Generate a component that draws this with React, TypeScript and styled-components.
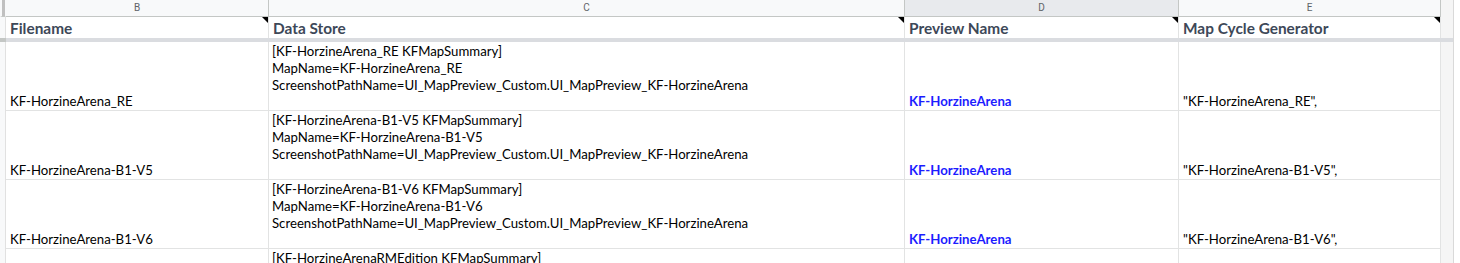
import React from "react";
import styled, { createGlobalStyle, css } from "styled-components";

const GlobalStyle = createGlobalStyle`
  html, body { margin: 0; padding: 0; background: #ffffff; overflow: hidden; }
  body { font-family: Lato, "Liberation Sans", Arial, sans-serif; }
`;

const COLS = "6px 263px 636px 274px 262px 13px 1fr";

const Sheet = styled.div`
  display: flex;
  flex-direction: column;
  width: 1460px;
  height: 263px;
  overflow: hidden;
  background: #ffffff;
`;

const Row = styled.div<{ $h: number }>`
  display: grid;
  grid-template-columns: ${COLS};
  height: ${(p) => p.$h}px;
  flex: none;
`;

const Gutter = styled.div<{ $kind: "colhead" | "row" | "divider" }>`
  box-sizing: border-box;
  ${(p) =>
    p.$kind === "colhead"
      ? css`
          background: #f8f9fa;
          border-left: 2px solid #f8f9fa;
          border-right: 1px solid #f8f9fa;
          box-shadow: inset 3px 0 0 #c0c0c0;
          border-bottom: 1px solid #c4c7c5;
        `
      : p.$kind === "divider"
      ? css`
          background: #c4c7c5;
        `
      : css`
          background: #f8f9fa;
          border-right: 1px solid #e1e1e1;
        `}
`;

const ColLetter = styled.div<{ $selected?: boolean }>`
  box-sizing: border-box;
  background: ${(p) => (p.$selected ? "#e8eaed" : "#f8f9fa")};
  border-right: 1px solid #c4c7c5;
  border-bottom: 1px solid #c4c7c5;
  font-family: Roboto, "Liberation Sans", Arial, sans-serif;
  font-size: 10px;
  color: #5f6368;
  display: flex;
  align-items: center;
  justify-content: center;
  line-height: 16px;
`;

const Track = styled.div<{ $divider?: boolean }>`
  box-sizing: border-box;
  background: ${(p) => (p.$divider ? "#dadce0" : "#f5f5f5")};
  border-right: 1px solid #d9d9d9;
`;

const Blank = styled.div`
  background: #ffffff;
`;

const HeadCell = styled.div`
  position: relative;
  box-sizing: border-box;
  border-right: 1px solid #e2e3e3;
  padding: 0 4px 0 4px;
  display: flex;
  align-items: flex-end;
  font-weight: 700;
  font-size: 15.4px;
  line-height: 19px;
  color: #3d4858;
  white-space: nowrap;
  &::after {
    content: "";
    position: absolute;
    top: 0;
    right: 0;
    width: 0;
    height: 0;
    border-top: 6px solid #000000;
    border-left: 6px solid transparent;
  }
`;

const DividerCell = styled.div`
  background: #dadce0;
`;

const Cell = styled.div<{ $align?: "top" | "bottom"; $tone?: "plain" | "link" }>`
  box-sizing: border-box;
  border-right: 1px solid #e2e3e3;
  border-bottom: 1px solid #e2e3e3;
  padding: ${(p) => (p.$align === "top" ? "1px 3px 0 3px" : "0 3px 0 4px")};
  display: flex;
  flex-direction: column;
  justify-content: ${(p) => (p.$align === "top" ? "flex-start" : "flex-end")};
  font-size: 13.2px;
  line-height: 17px;
  color: ${(p) => (p.$tone === "link" ? "#1c1cff" : "#000000")};
  font-weight: ${(p) => (p.$tone === "link" ? 700 : 400)};
  white-space: nowrap;
  overflow: hidden;
`;

const Line = styled.div``;

type Entry = { name: string; summary: string; preview: string };

const entries: Entry[] = [
  { name: "KF-HorzineArena_RE", summary: "KF-HorzineArena_RE", preview: "KF-HorzineArena" },
  { name: "KF-HorzineArena-B1-V5", summary: "KF-HorzineArena-B1-V5", preview: "KF-HorzineArena" },
  { name: "KF-HorzineArena-B1-V6", summary: "KF-HorzineArena-B1-V6", preview: "KF-HorzineArena" },
];

export default function App() {
  return (
    <>
      <GlobalStyle />
      <Sheet>
        <Row $h={17}>
          <Gutter $kind="colhead" />
          <ColLetter>B</ColLetter>
          <ColLetter>C</ColLetter>
          <ColLetter $selected>D</ColLetter>
          <ColLetter>E</ColLetter>
          <Track />
          <Blank />
        </Row>
        <Row $h={21}>
          <Gutter $kind="row" />
          <HeadCell>Filename</HeadCell>
          <HeadCell>Data Store</HeadCell>
          <HeadCell>Preview Name</HeadCell>
          <HeadCell>Map Cycle Generator</HeadCell>
          <Track />
          <Blank />
        </Row>
        <Row $h={4}>
          <Gutter $kind="divider" />
          <DividerCell />
          <DividerCell />
          <DividerCell />
          <DividerCell />
          <Track $divider />
          <Blank />
        </Row>
        {entries.map((e) => (
          <Row $h={69} key={e.name}>
            <Gutter $kind="row" />
            <Cell $align="bottom">{e.name}</Cell>
            <Cell $align="top">
              <Line>[{e.summary} KFMapSummary]</Line>
              <Line>MapName={e.summary}</Line>
              <Line>ScreenshotPathName=UI_MapPreview_Custom.UI_MapPreview_{e.preview}</Line>
            </Cell>
            <Cell $align="bottom" $tone="link">{e.preview}</Cell>
            <Cell $align="bottom">"{e.name}",</Cell>
            <Track />
            <Blank />
          </Row>
        ))}
        <Row $h={69}>
          <Gutter $kind="row" />
          <Cell $align="top" />
          <Cell $align="top">
            <Line>[KF-HorzineArenaRMEdition KFMapSummary]</Line>
          </Cell>
          <Cell $align="top" />
          <Cell $align="top" />
          <Track />
          <Blank />
        </Row>
      </Sheet>
    </>
  );
}
